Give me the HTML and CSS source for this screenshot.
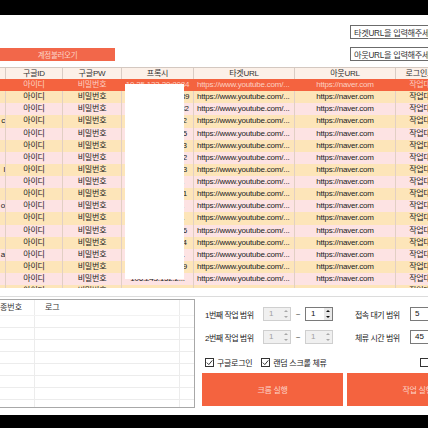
FILE: index.html
```html
<!DOCTYPE html>
<html lang="ko">
<head>
<meta charset="utf-8">
<title>계정 작업</title>
<link rel="stylesheet" href="styles.css">
</head>
<body>
<div class="titlebar"></div>
<div class="top">
  <div class="load-btn">계정불러오기</div>
  <div class="url-inputs">
    <div class="url-input">타겟URL을 입력해주세요</div>
    <div class="url-input">아웃URL을 입력해주세요</div>
  </div>
</div>
<div class="grid">
  <div class="row head">
    <div class="cell"></div><div class="cell">구글ID</div><div class="cell">구글PW</div><div class="cell">프록시</div><div class="cell">타겟URL</div><div class="cell">아웃URL</div><div class="cell">로그인로그</div>
  </div>
  <div class="row sel"><div class="cell c0"></div><div class="cell">아이디</div><div class="cell">비밀번호</div><div class="cell">10.25.133.20:8084</div><div class="cell url">https://www.youtube.com/...</div><div class="cell">https://naver.com</div><div class="cell">작업대기</div></div>
  <div class="row odd"><div class="cell c0"></div><div class="cell">아이디</div><div class="cell">비밀번호</div><div class="cell">61.82.14.129:8089</div><div class="cell url">https://www.youtube.com/...</div><div class="cell">https://naver.com</div><div class="cell">작업대기</div></div>
  <div class="row even"><div class="cell c0"></div><div class="cell">아이디</div><div class="cell">비밀번호</div><div class="cell">112.17.54.21:8082</div><div class="cell url">https://www.youtube.com/...</div><div class="cell">https://naver.com</div><div class="cell">작업대기</div></div>
  <div class="row odd"><div class="cell c0">c</div><div class="cell">아이디</div><div class="cell">비밀번호</div><div class="cell">58.23.114.7:8082</div><div class="cell url">https://www.youtube.com/...</div><div class="cell">https://naver.com</div><div class="cell">작업대기</div></div>
  <div class="row even"><div class="cell c0"></div><div class="cell">아이디</div><div class="cell">비밀번호</div><div class="cell">121.5.43.18:8085</div><div class="cell url">https://www.youtube.com/...</div><div class="cell">https://naver.com</div><div class="cell">작업대기</div></div>
  <div class="row odd"><div class="cell c0"></div><div class="cell">아이디</div><div class="cell">비밀번호</div><div class="cell">39.11.240.6:8083</div><div class="cell url">https://www.youtube.com/...</div><div class="cell">https://naver.com</div><div class="cell">작업대기</div></div>
  <div class="row even"><div class="cell c0"></div><div class="cell">아이디</div><div class="cell">비밀번호</div><div class="cell">175.2.81.33:8082</div><div class="cell url">https://www.youtube.com/...</div><div class="cell">https://naver.com</div><div class="cell">작업대기</div></div>
  <div class="row odd"><div class="cell c0">l</div><div class="cell">아이디</div><div class="cell">비밀번호</div><div class="cell">61.7.152.40:8083</div><div class="cell url">https://www.youtube.com/...</div><div class="cell">https://naver.com</div><div class="cell">작업대기</div></div>
  <div class="row even"><div class="cell c0"></div><div class="cell">아이디</div><div class="cell">비밀번호</div><div class="cell">211.234.117.1...</div><div class="cell url">https://www.youtube.com/...</div><div class="cell">https://naver.com</div><div class="cell">작업대기</div></div>
  <div class="row odd"><div class="cell c0"></div><div class="cell">아이디</div><div class="cell">비밀번호</div><div class="cell">14.63.22.18:8081</div><div class="cell url">https://www.youtube.com/...</div><div class="cell">https://naver.com</div><div class="cell">작업대기</div></div>
  <div class="row even"><div class="cell c0">o</div><div class="cell">아이디</div><div class="cell">비밀번호</div><div class="cell">183.111.204.1...</div><div class="cell url">https://www.youtube.com/...</div><div class="cell">https://naver.com</div><div class="cell">작업대기</div></div>
  <div class="row odd"><div class="cell c0"></div><div class="cell">아이디</div><div class="cell">비밀번호</div><div class="cell">203.245.118.1...</div><div class="cell url">https://www.youtube.com/...</div><div class="cell">https://naver.com</div><div class="cell">작업대기</div></div>
  <div class="row even"><div class="cell c0"></div><div class="cell">아이디</div><div class="cell">비밀번호</div><div class="cell">59.3.181.24:8086</div><div class="cell url">https://www.youtube.com/...</div><div class="cell">https://naver.com</div><div class="cell">작업대기</div></div>
  <div class="row odd"><div class="cell c0"></div><div class="cell">아이디</div><div class="cell">비밀번호</div><div class="cell">118.4.26.71:8084</div><div class="cell url">https://www.youtube.com/...</div><div class="cell">https://naver.com</div><div class="cell">작업대기</div></div>
  <div class="row even"><div class="cell c0">a</div><div class="cell">아이디</div><div class="cell">비밀번호</div><div class="cell">222.122.231.1...</div><div class="cell url">https://www.youtube.com/...</div><div class="cell">https://naver.com</div><div class="cell">작업대기</div></div>
  <div class="row odd"><div class="cell c0"></div><div class="cell">아이디</div><div class="cell">비밀번호</div><div class="cell">27.96.13.58:8089</div><div class="cell url">https://www.youtube.com/...</div><div class="cell">https://naver.com</div><div class="cell">작업대기</div></div>
  <div class="row even"><div class="cell c0"></div><div class="cell">아이디</div><div class="cell">비밀번호</div><div class="cell">106.243.152.2...</div><div class="cell url">https://www.youtube.com/...</div><div class="cell">https://naver.com</div><div class="cell">작업대기</div></div>
  <div class="row odd"><div class="cell c0"></div><div class="cell">아이디</div><div class="cell">비밀번호</div><div class="cell">61.82.14.129:8089</div><div class="cell url">https://www.youtube.com/...</div><div class="cell">https://naver.com</div><div class="cell">작업대기</div></div>
  <div class="mask"></div>
</div>
<div class="sep"></div>
<div class="bottom">
  <div class="log">
    <div class="log-row log-head"><div class="lc">종번호</div><div class="lc">로그</div><div class="lc"></div></div>
    <div class="log-row"><div class="lc"></div><div class="lc"></div><div class="lc"></div></div>
    <div class="log-row"><div class="lc"></div><div class="lc"></div><div class="lc"></div></div>
    <div class="log-row"><div class="lc"></div><div class="lc"></div><div class="lc"></div></div>
    <div class="log-row"><div class="lc"></div><div class="lc"></div><div class="lc"></div></div>
    <div class="log-row"><div class="lc"></div><div class="lc"></div><div class="lc"></div></div>
    <div class="log-row"><div class="lc"></div><div class="lc"></div><div class="lc"></div></div>
    <div class="log-row"><div class="lc"></div><div class="lc"></div><div class="lc"></div></div>
    <div class="log-row"><div class="lc"></div><div class="lc"></div><div class="lc"></div></div>
  </div>
  <div class="controls">
    <div class="ctrl-row">
      <span class="label">1번째 작업 범위</span>
      <div class="spin disabled"><span class="val">1</span><span class="arrows"><i class="up"></i><i class="down"></i></span></div>
      <span class="tilde">~</span>
      <div class="spin"><span class="val">1</span><span class="arrows"><i class="up"></i><i class="down"></i></span></div>
      <span class="label label2">접속 대기 범위</span>
      <div class="field">5</div>
    </div>
    <div class="ctrl-row">
      <span class="label">2번째 작업 범위</span>
      <div class="spin disabled"><span class="val">1</span><span class="arrows"><i class="up"></i><i class="down"></i></span></div>
      <span class="tilde">~</span>
      <div class="spin disabled"><span class="val">1</span><span class="arrows"><i class="up"></i><i class="down"></i></span></div>
      <span class="label label2">체류 시간 범위</span>
      <div class="field">45</div>
    </div>
    <div class="ctrl-row checks">
      <span class="cb"><svg viewBox="0 0 9 9" width="9" height="9"><path d="M1.8 4.6 L3.8 6.6 L7.3 2.4" fill="none" stroke="#333" stroke-width="1"/></svg></span>
      <span class="cb-label">구글로그인</span>
      <span class="cb cb2"><svg viewBox="0 0 9 9" width="9" height="9"><path d="M1.8 4.6 L3.8 6.6 L7.3 2.4" fill="none" stroke="#333" stroke-width="1"/></svg></span>
      <span class="cb-label">랜덤 스크롤 체류</span>
      <span class="cb cb3"></span>
    </div>
    <div class="btn-row">
      <div class="btn">크롬 실행</div>
      <div class="btn">작업 실행</div>
    </div>
  </div>
</div>
<div class="bottombar"></div>
</body>
</html>
```
FILE: styles.css
```css
* { box-sizing: border-box; margin: 0; padding: 0; }
html, body { width: 428px; height: 428px; overflow: hidden; background: #fff; }
body {
  font-family: "Liberation Sans", "Noto Sans CJK KR", sans-serif;
  font-size: 8px;
  color: #222;
}
.titlebar { height: 15px; background: #000; }
.bottombar { height: 13px; background: #000; }

.top { height: 52px; display: flex; justify-content: space-between; }
.load-btn {
  align-self: flex-end;
  margin-bottom: 6px;
  width: 115px;
  height: 13px;
  background: #f2674a;
  color: #fcd3c8;
  display: flex;
  align-items: center;
  justify-content: center;
  font-size: 7.5px;
  letter-spacing: -0.3px;
}
.url-inputs {
  display: flex;
  flex-direction: column;
  gap: 8px;
  padding-top: 10px;
  margin-right: -40px;
}
.url-input {
  width: 118px;
  height: 14px;
  border: 1px solid #6b6b6b;
  padding-left: 3px;
  display: flex;
  align-items: center;
  white-space: nowrap;
  overflow: hidden;
  color: #333;
  font-size: 8.2px;
  letter-spacing: -0.3px;
}

.grid { position: relative; height: 221px; overflow: hidden; }
.row {
  display: grid;
  grid-template-columns: 6px 57px 59px 72px 101px 101px 56px;
  height: 12.13px;
  width: 452px;
}
.cell {
  border-right: 1px solid #e2cfc4;
  overflow: hidden;
  white-space: nowrap;
  text-align: center;
  line-height: 12px;
  padding: 0 2px;
  letter-spacing: -0.2px;
}
.cell.c0 { text-align: right; padding: 0; }
.cell.url { text-align: left; padding-left: 3px; }
.row.head {
  height: 12px;
  background: #fcf0e8;
  border-top: 1px solid #d4c8c0;
  color: #333;
}
.row.head .cell { line-height: 11px; border-right-color: #d9ccc4; }
.row.sel { background: #f4633f; color: #fcd0c2; }
.row.sel .cell { border-right-color: #f4633f; }
.row.odd { background: #fde5b9; }
.row.even { background: #fde3e3; }
.mask {
  position: absolute;
  left: 125px;
  top: 17px;
  width: 59px;
  height: 195px;
  background: #fff;
}

.sep { height: 9px; border-bottom: 1px solid #dcdcdc; }

.bottom { height: 118px; display: flex; gap: 5px; padding-top: 2px; }
.log {
  width: 195px;
  height: 109px;
  border: 1px solid #a8a8a8;
  border-left: none;
  overflow: hidden;
  flex-shrink: 0;
}
.log-row {
  display: grid;
  grid-template-columns: 35px 145px 1fr;
  height: 12px;
  border-bottom: 1px solid #ececec;
}
.log-row.log-head { height: 16px; border-bottom-color: #f2f2f2; }
.lc { border-right: 1px solid #ececec; line-height: 15px; white-space: nowrap; overflow: hidden; color: #333; }
.lc:last-child { border-right: none; }
.log-head .lc:nth-child(2) { padding-left: 10px; }

.controls {
  width: 228px;
  flex-shrink: 0;
  padding: 8px 0 0 5px;
  display: flex;
  flex-direction: column;
}
.ctrl-row { display: flex; align-items: center; height: 14px; flex-shrink: 0; }
.ctrl-row + .ctrl-row { margin-top: 9px; }
.label { width: 58px; flex-shrink: 0; white-space: nowrap; letter-spacing: -0.5px; color: #222; }
.label2 { margin-left: 22px; width: 55px; }
.tilde { width: 14px; flex-shrink: 0; text-align: center; color: #333; }
.spin {
  width: 28px;
  height: 14px;
  flex-shrink: 0;
  display: flex;
  border: 1px solid #7a7a7a;
  background: #fff;
  color: #111;
}
.spin.disabled { border-color: #cfcfcf; background: #f0f0f0; color: #a0a0a0; }
.val { flex: 1; padding-left: 5px; line-height: 12px; }
.arrows {
  width: 8px;
  display: flex;
  flex-direction: column;
  background: #e8e8e8;
}
.spin.disabled .arrows { background: #f0f0f0; }
.arrows i { flex: 1; display: flex; align-items: center; justify-content: center; }
.arrows i::before {
  content: "";
  border-left: 2px solid transparent;
  border-right: 2px solid transparent;
}
.arrows .up::before { border-bottom: 2px solid #111; }
.arrows .down::before { border-top: 2px solid #111; }
.spin.disabled .arrows .up::before { border-bottom-color: #a8a8a8; }
.spin.disabled .arrows .down::before { border-top-color: #a8a8a8; }
.field {
  width: 40px;
  height: 14px;
  flex-shrink: 0;
  border: 1px solid #7a7a7a;
  padding-left: 4px;
  line-height: 12px;
  color: #111;
}

.ctrl-row.checks { height: 12px; margin-top: 12px; }
.cb {
  width: 9px;
  height: 9px;
  flex-shrink: 0;
  border: 1px solid #333;
  display: flex;
  background: #fff;
}
.cb svg { margin: -1px; }
.cb-label { margin-left: 3px; white-space: nowrap; letter-spacing: -0.3px; }
.cb2 { margin-left: 9px; }
.cb3 { margin-left: 93px; }

.btn-row { display: flex; gap: 4px; margin: 5px 0 0 -3px; }
.btn {
  width: 141px;
  height: 33px;
  flex-shrink: 0;
  background: #f4633f;
  color: #fcd3c8;
  display: flex;
  align-items: center;
  justify-content: center;
  letter-spacing: -0.3px;
}
```
